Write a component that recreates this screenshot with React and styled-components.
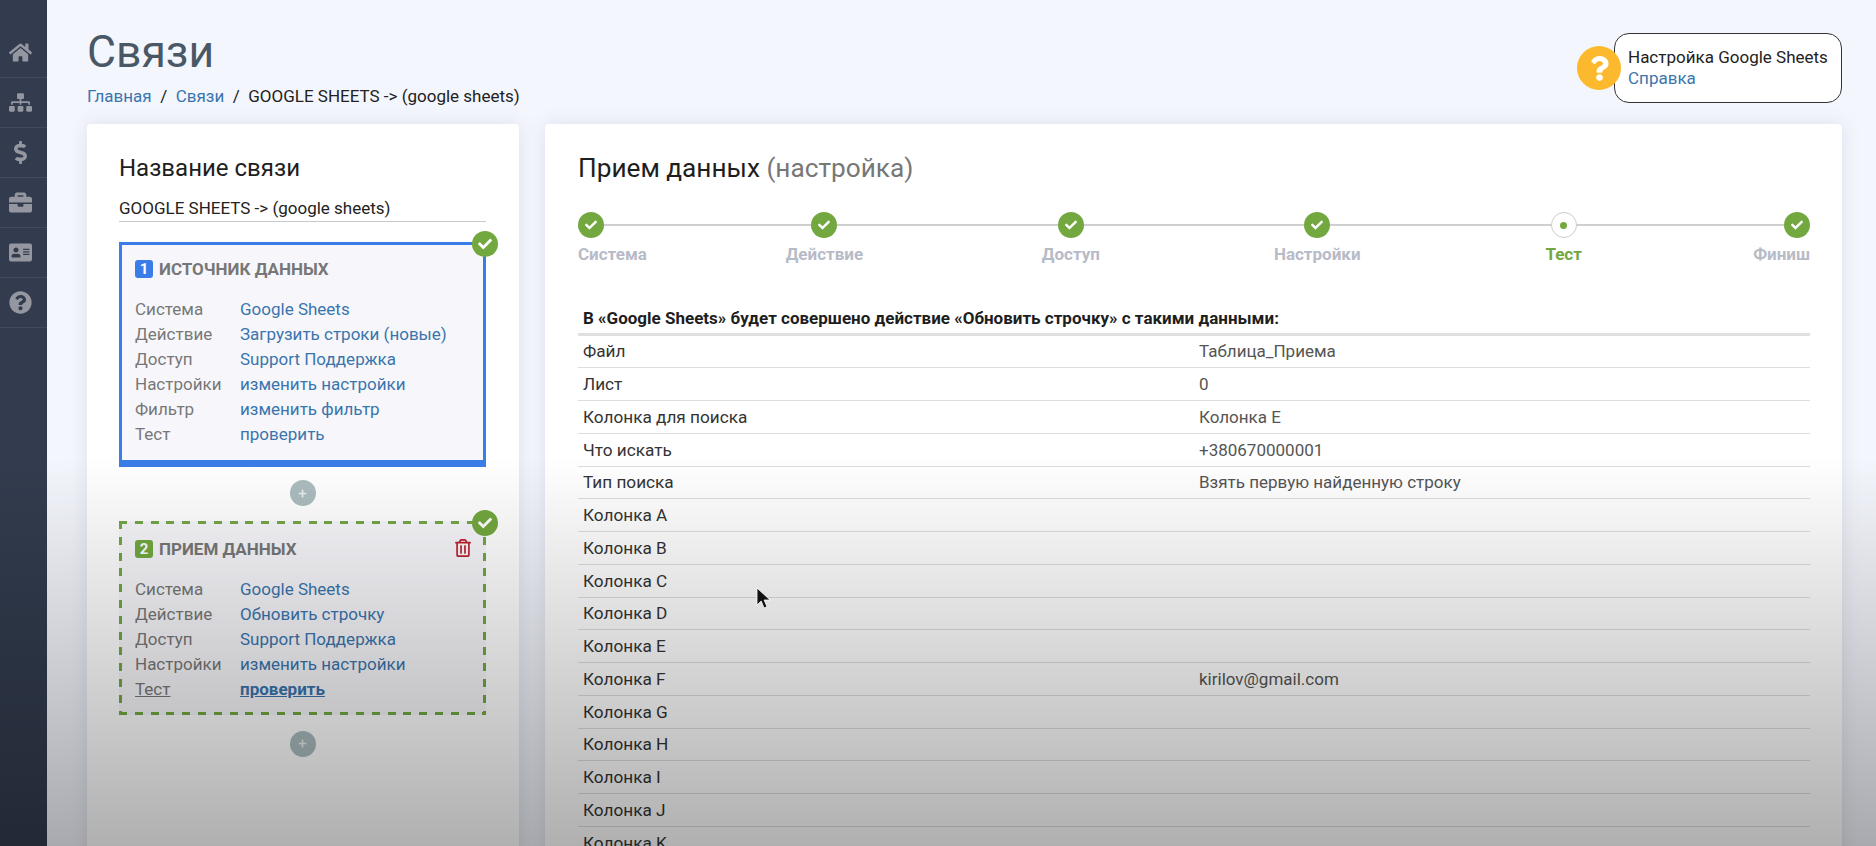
import React from 'react';
import styled, { createGlobalStyle } from 'styled-components';
import {
  FaHome,
  FaSitemap,
  FaDollarSign,
  FaBriefcase,
  FaAddressCard,
  FaQuestionCircle,
  FaCheck,
  FaPlus,
  FaQuestion,
  FaRegTrashAlt,
} from 'react-icons/fa';

const GlobalStyle = createGlobalStyle`
  html, body {
    margin: 0;
    height: 100%;
    overflow: hidden;
    background: #f4f6fd;
    font-family: Roboto, "Liberation Sans", sans-serif;
  }
  * { box-sizing: border-box; }
`;

const navIcons = [FaHome, FaSitemap, FaDollarSign, FaBriefcase, FaAddressCard, FaQuestionCircle];

const sourceRows = [
  ['Система', 'Google Sheets'],
  ['Действие', 'Загрузить строки (новые)'],
  ['Доступ', 'Support Поддержка'],
  ['Настройки', 'изменить настройки'],
  ['Фильтр', 'изменить фильтр'],
  ['Тест', 'проверить'],
];

const targetRows = [
  ['Система', 'Google Sheets'],
  ['Действие', 'Обновить строчку'],
  ['Доступ', 'Support Поддержка'],
  ['Настройки', 'изменить настройки'],
  ['Тест', 'проверить', true],
];

const steps = [
  { name: 'Система', done: true },
  { name: 'Действие', done: true },
  { name: 'Доступ', done: true },
  { name: 'Настройки', done: true },
  { name: 'Тест', active: true },
  { name: 'Финиш', done: true },
];

const tableRows = [
  ['Файл', 'Таблица_Приема'],
  ['Лист', '0'],
  ['Колонка для поиска', 'Колонка E'],
  ['Что искать', '+380670000001'],
  ['Тип поиска', 'Взять первую найденную строку'],
  ['Колонка A', ''],
  ['Колонка B', ''],
  ['Колонка C', ''],
  ['Колонка D', ''],
  ['Колонка E', ''],
  ['Колонка F', 'kirilov@gmail.com'],
  ['Колонка G', ''],
  ['Колонка H', ''],
  ['Колонка I', ''],
  ['Колонка J', ''],
  ['Колонка K', ''],
];

const BlockRows = ({ rows }) => (
  <Rows>
    {rows.map(([label, value, current]) => (
      <React.Fragment key={label}>
        <RowLabel $current={current}>{label}</RowLabel>
        <RowLink $current={current}>{value}</RowLink>
      </React.Fragment>
    ))}
  </Rows>
);

const App = () => {
  return (
    <Page>
      <GlobalStyle />
      <Sidebar>
        {navIcons.map((Icon, i) => (
          <NavItem key={i}>
            <Icon />
          </NavItem>
        ))}
      </Sidebar>
      <Main>
        <Header>
          <div>
            <Title>Связи</Title>
            <Breadcrumbs>
              <a>Главная</a>
              <Slash>/</Slash>
              <a>Связи</a>
              <Slash>/</Slash>
              <span>GOOGLE SHEETS -&gt; (google sheets)</span>
            </Breadcrumbs>
          </div>
          <Help>
            <HelpIcon>
              <FaQuestion />
            </HelpIcon>
            <HelpBox>
              <span>Настройка Google Sheets</span>
              <a>Справка</a>
            </HelpBox>
          </Help>
        </Header>
        <Columns>
          <LeftCard>
            <LeftTitle>Название связи</LeftTitle>
            <NameField>GOOGLE SHEETS -&gt; (google sheets)</NameField>
            <SourceBlock>
              <CheckBadge>
                <FaCheck />
              </CheckBadge>
              <BlockTitle>
                <Num $color="#3b7de8">1</Num>
                ИСТОЧНИК ДАННЫХ
              </BlockTitle>
              <BlockRows rows={sourceRows} />
            </SourceBlock>
            <AddButton>
              <FaPlus />
            </AddButton>
            <TargetBlock>
              <CheckBadge>
                <FaCheck />
              </CheckBadge>
              <BlockTitle>
                <Num $color="#72a83f">2</Num>
                ПРИЕМ ДАННЫХ
                <Trash>
                  <FaRegTrashAlt />
                </Trash>
              </BlockTitle>
              <BlockRows rows={targetRows} />
            </TargetBlock>
            <AddButton>
              <FaPlus />
            </AddButton>
          </LeftCard>
          <RightCard>
            <RightTitle>
              Прием данных <Muted>(настройка)</Muted>
            </RightTitle>
            <Steps>
              {steps.map((s, i) => (
                <Step key={s.name} $edge={i === 0 ? 'start' : i === steps.length - 1 ? 'end' : ''}>
                  <StepDot $active={s.active}>{s.done ? <FaCheck /> : <i />}</StepDot>
                  <StepName $active={s.active}>{s.name}</StepName>
                </Step>
              ))}
            </Steps>
            <TableHead>
              В «Google Sheets» будет совершено действие «Обновить строчку» с такими данными:
            </TableHead>
            {tableRows.map(([name, value]) => (
              <TableRow key={name}>
                <span>{name}</span>
                <Value>{value}</Value>
              </TableRow>
            ))}
          </RightCard>
        </Columns>
      </Main>
      <Shade />
      <Cursor viewBox="0 0 14 22">
        <path
          d="M1 1v17l4.2-4 2.8 7 3-1.3-2.9-6.7H14z"
          fill="#111"
          stroke="#fff"
          strokeWidth="0.8"
        />
      </Cursor>
    </Page>
  );
};

const Page = styled.div`
  display: flex;
  height: 100vh;
  overflow: hidden;
  position: relative;
  background: #f4f6fd;
`;

const Sidebar = styled.nav`
  flex: 0 0 47px;
  background: #323c4e;
  padding-top: 27.5px;
`;

const NavItem = styled.div`
  height: 50px;
  padding-right: 6px;
  display: flex;
  align-items: center;
  justify-content: center;
  border-bottom: 1px solid #414b5c;
  color: #94979f;
  font-size: 23px;
`;

const Main = styled.main`
  flex: 1;
  min-width: 0;
  padding: 0 34px 0 40px;
`;

const Header = styled.header`
  height: 124px;
  display: flex;
  justify-content: space-between;
  align-items: flex-start;
`;

const Title = styled.h1`
  margin: 0;
  padding-top: 26px;
  font-size: 44.5px;
  line-height: 52px;
  font-weight: 400;
  color: #4a5866;
`;

const Breadcrumbs = styled.div`
  display: flex;
  margin-top: 8px;
  font-size: 17px;
  line-height: 20px;
  color: #222;
  a {
    color: #3a75ad;
  }
`;

const Slash = styled.span`
  margin: 0 8.5px;
`;

const Help = styled.div`
  display: flex;
  align-items: center;
  margin-top: 33px;
`;

const HelpIcon = styled.div`
  position: relative;
  z-index: 1;
  width: 44px;
  height: 44px;
  margin-right: -7px;
  border-radius: 50%;
  background: #fdb92e;
  color: #fff;
  font-size: 25px;
  display: flex;
  align-items: center;
  justify-content: center;
`;

const HelpBox = styled.div`
  width: 228px;
  height: 70px;
  padding: 13px 10px 0 13px;
  background: #fff;
  border: 1.5px solid #333;
  border-radius: 15px;
  font-size: 17px;
  line-height: 21px;
  color: #222;
  display: flex;
  flex-direction: column;
  a {
    color: #3a75ad;
  }
`;

const Columns = styled.div`
  display: flex;
  gap: 26px;
  align-items: stretch;
`;

const Card = styled.section`
  background: #fff;
  border-radius: 4px;
  box-shadow: 0 0 18px rgba(120, 125, 160, 0.18);
  min-height: 900px;
`;

const LeftCard = styled(Card)`
  flex: 0 0 432px;
  padding: 28px 33px 0 32px;
`;

const RightCard = styled(Card)`
  flex: 1;
  min-width: 0;
  padding: 28px 32px 0 33px;
`;

const LeftTitle = styled.h2`
  margin: 0;
  font-size: 24px;
  line-height: 32px;
  font-weight: 400;
  color: #1e1e1e;
`;

const RightTitle = styled(LeftTitle)`
  font-size: 26.2px;
`;

const Muted = styled.span`
  color: #777;
`;

const NameField = styled.div`
  margin-top: 13px;
  height: 25px;
  border-bottom: 1.5px solid #c8c8c8;
  font-size: 17px;
  line-height: 23px;
  color: #222;
`;

const Block = styled.div`
  position: relative;
  padding: 13px 13px 0;
`;

const SourceBlock = styled(Block)`
  margin-top: 20px;
  height: 225px;
  background: #f7f7fb;
  border: 3px solid #3b7de8;
  border-bottom-width: 7px;
`;

const TargetBlock = styled(Block)`
  height: 194px;
  margin-bottom: 15.5px;
  padding-top: 14px;
  border: 3px solid transparent;
  background-color: #f7f7fb;
  background-origin: border-box;
  background-image:
    repeating-linear-gradient(90deg, #71a844 0 8px, transparent 8px 15.8px),
    repeating-linear-gradient(90deg, #71a844 0 8px, transparent 8px 15.8px),
    repeating-linear-gradient(180deg, #71a844 0 8px, transparent 8px 15.8px),
    repeating-linear-gradient(180deg, #71a844 0 8px, transparent 8px 15.8px);
  background-size: 100% 3px, 100% 3px, 3px 100%, 3px 100%;
  background-position: top left, bottom left, top left, top right;
  background-repeat: no-repeat;
`;

const CheckBadge = styled.div`
  position: absolute;
  top: -14px;
  right: -15px;
  width: 26px;
  height: 26px;
  border-radius: 50%;
  background: #72a83f;
  color: #fff;
  font-size: 14px;
  display: flex;
  align-items: center;
  justify-content: center;
`;

const BlockTitle = styled.div`
  display: flex;
  align-items: center;
  height: 22px;
  font-size: 17px;
  font-weight: 700;
  color: #777;
`;

const Num = styled.span`
  width: 18px;
  height: 18px;
  margin-right: 6px;
  border-radius: 3px;
  background: ${(p) => p.$color};
  color: #fff;
  font-size: 15px;
  font-weight: 700;
  text-align: center;
  line-height: 18px;
`;

const Trash = styled.span`
  margin-left: auto;
  margin-right: -2px;
  color: #bd2130;
  font-size: 18px;
  line-height: 1;
`;

const Rows = styled.div`
  display: grid;
  grid-template-columns: 105px 1fr;
  grid-auto-rows: 25px;
  align-items: center;
  margin-top: 16px;
  font-size: 17px;
`;

const RowLabel = styled.span`
  color: #777;
  text-decoration: ${(p) => (p.$current ? 'underline' : 'none')};
`;

const RowLink = styled.a`
  color: #3a75ad;
  font-weight: ${(p) => (p.$current ? 700 : 400)};
  text-decoration: ${(p) => (p.$current ? 'underline' : 'none')};
`;

const AddButton = styled.div`
  width: 26px;
  height: 26px;
  margin: 13px auto 15px;
  border-radius: 50%;
  background: #abbcbf;
  color: #e8eeee;
  font-size: 9px;
  display: flex;
  align-items: center;
  justify-content: center;
`;

const Steps = styled.div`
  position: relative;
  display: flex;
  margin-top: 28px;
  &::before {
    content: '';
    position: absolute;
    left: 13px;
    right: 13px;
    top: 12px;
    height: 2px;
    background: #cfcfcf;
  }
`;

const Step = styled.div`
  position: relative;
  flex: ${(p) => (p.$edge ? '1 1 0' : '2 2 0')};
  min-width: 0;
  display: flex;
  flex-direction: column;
  align-items: ${(p) =>
    p.$edge === 'start' ? 'flex-start' : p.$edge === 'end' ? 'flex-end' : 'center'};
`;

const StepDot = styled.div`
  width: 26px;
  height: 26px;
  border-radius: 50%;
  background: ${(p) => (p.$active ? '#fff' : '#72a83f')};
  border: ${(p) => (p.$active ? '1.5px solid #ccc' : 'none')};
  color: #fff;
  font-size: 12px;
  display: flex;
  align-items: center;
  justify-content: center;
  i {
    width: 7px;
    height: 7px;
    border-radius: 50%;
    background: #72a83f;
  }
`;

const StepName = styled.div`
  margin-top: 6px;
  font-size: 17px;
  line-height: 20px;
  font-weight: 700;
  color: ${(p) => (p.$active ? '#72a83f' : '#b7bbc7')};
`;

const TableHead = styled.div`
  margin-top: 41.5px;
  padding: 0 5px;
  height: 30px;
  line-height: 24px;
  font-size: 17px;
  font-weight: 700;
  color: #1e1e1e;
  border-bottom: 3px solid #e0e0e0;
`;

const TableRow = styled.div`
  display: grid;
  grid-template-columns: 50% 50%;
  height: 32.75px;
  align-items: center;
  font-size: 17.2px;
  color: #333;
  border-bottom: 1.5px solid #dedede;
  span {
    padding-left: 5px;
  }
`;

const Value = styled.span`
  color: #555;
  font-size: 17px;
`;

const Shade = styled.div`
  position: absolute;
  inset: 0;
  pointer-events: none;
  background: linear-gradient(to bottom, rgba(0, 0, 0, 0) 54%, rgba(0, 0, 0, 0.31) 100%);
`;

const Cursor = styled.svg`
  position: absolute;
  left: 756px;
  top: 587px;
  width: 14px;
  height: 22px;
`;

export default App;
